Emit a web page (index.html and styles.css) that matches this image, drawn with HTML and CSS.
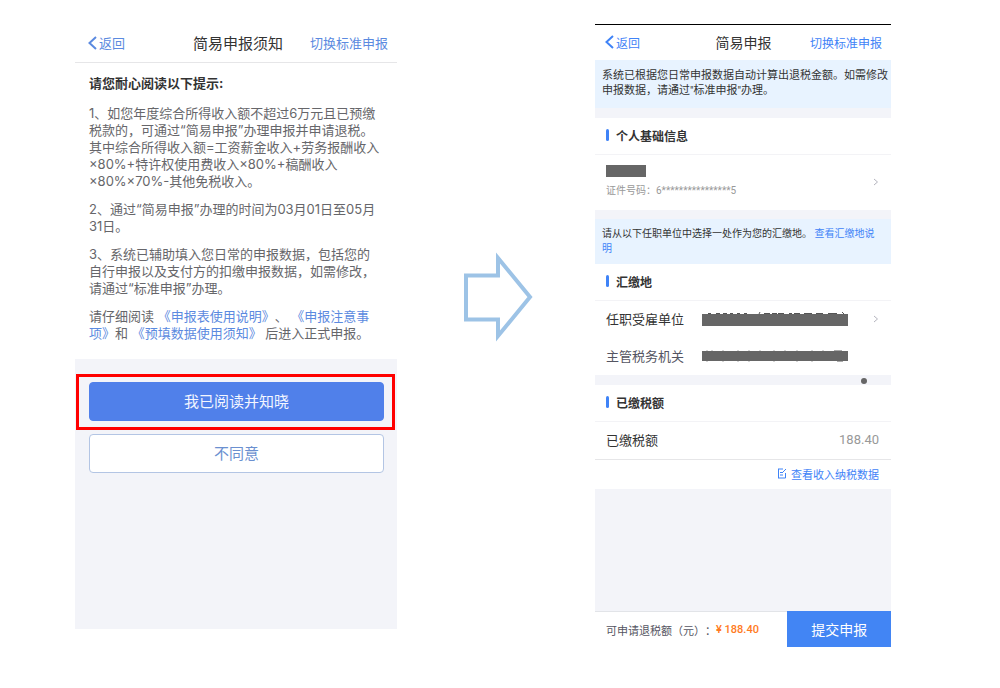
FILE: index.html
```html
<!DOCTYPE html>
<html lang="zh-CN">
<head>
  <meta charset="UTF-8">
  <meta name="viewport" content="width=device-width, initial-scale=1">
  <title>简易申报</title>
  <link rel="stylesheet" href="styles.css">
</head>
<body>

  <main class="steps">

    <!-- 申报须知 -->
    <section class="phone notice-phone">
      <header class="topbar">
        <a href="#" class="back"><svg width="9" height="14" viewBox="0 0 9 14"><path d="M8 1L1.5 7L8 13"/></svg>返回</a>
        <h1>简易申报须知</h1>
        <a href="#" class="switch">切换标准申报</a>
      </header>

      <div class="terms">
        <h2>请您耐心阅读以下提示:</h2>
        <p>1、如您年度综合所得收入额不超过6万元且已预缴<br>税款的，可通过“简易申报”办理申报并申请退税。<br>其中综合所得收入额=工资薪金收入+劳务报酬收入<br>×80%+特许权使用费收入×80%+稿酬收入<br>×80%×70%-其他免税收入。</p>
        <p>2、通过“简易申报”办理的时间为03月01日至05月<br>31日。</p>
        <p>3、系统已辅助填入您日常的申报数据，包括您的<br>自行申报以及支付方的扣缴申报数据，如需修改，<br>请通过“标准申报”办理。</p>
        <p>请仔细阅读 <a href="#">《申报表使用说明》</a>、 <a href="#">《申报注意事<br>项》</a>和 <a href="#">《预填数据使用须知》</a> 后进入正式申报。</p>
      </div>

      <div class="actions">
        <div class="highlight"><button type="button" class="btn btn-primary">我已阅读并知晓</button></div>
        <button type="button" class="btn btn-plain">不同意</button>
      </div>
    </section>

    <svg class="arrow" width="72" height="94" viewBox="0 0 72 94"><path d="M3 25.500H35V8L67 47L35 86V69.500H3Z"/></svg>

    <!-- 简易申报 -->
    <section class="phone form-phone">
      <header class="topbar">
        <a href="#" class="back"><svg width="9" height="14" viewBox="0 0 9 14"><path d="M8 1L1.500 7L8 13"/></svg>返回</a>
        <h1>简易申报</h1>
        <a href="#" class="switch">切换标准申报</a>
      </header>

      <p class="tip tip-main">系统已根据您日常申报数据自动计算出退税金额。如需修改<br>申报数据，请通过"标准申报"办理。</p>

      <div class="card">
        <h2>个人基础信息</h2>
        <div class="person">
          <div>
            <span class="mask mask-name"></span>
            <p>证件号码：6****************5</p>
          </div>
          <svg class="chevron" width="6" height="8" viewBox="0 0 6 8"><path d="M1 1L4.500 4L1 7"/></svg>
        </div>
      </div>

      <p class="tip tip-place">请从以下任职单位中选择一处作为您的汇缴地。 <a href="#">查看汇缴地说<br>明</a></p>

      <div class="card">
        <h2>汇缴地</h2>
        <div class="row">
          <span class="label">任职受雇单位</span>
          <svg class="masked" viewBox="0 0 146 14" width="146" height="14">
            <path class="scrap" d="M6 1.500h3M14 1.500h4M21 1.500h4M28 1.500h3M35 1.500h3M42 1.500h3M58 0l-1 2M62 1.500h6M70 1.500h5M76 1.500h6M87 1.500h3M92 1.500h6M102 1.500h8M114 1.500h7M126 1.500h9M140 0l2 2"/>
            <rect y="2" width="146" height="12"/>
          </svg>
          <svg class="chevron" width="6" height="8" viewBox="0 0 6 8"><path d="M1 1L4.500 4L1 7"/></svg>
        </div>
        <div class="row">
          <span class="label label-soft">主管税务机关</span>
          <svg class="masked" viewBox="0 0 146 14" width="146" height="14">
            <path class="scrap scrap-soft" d="M5 1v12M10 1v11M21 1v12M36 1v12M47 1v12M58 1v11M72 1v12M83 1v11M95 1v12M110 1v12M121 1v11M132 1.500h8M135 12.500h6"/>
            <rect y="2" width="146" height="10"/>
          </svg>
        </div>
      </div>

      <div class="divider"><i class="dot"></i></div>

      <div class="card">
        <h2>已缴税额</h2>
        <div class="row">
          <span class="label">已缴税额</span>
          <span class="amount">188.40</span>
        </div>
        <div class="more">
          <a href="#"><svg width="10" height="11" viewBox="0 0 10 11"><path d="M6 1H1M1.500 1V10M1 10H8.500V5M3 4.500H5M3 7H6M5 5L9 1"/></svg>查看收入纳税数据</a>
        </div>
      </div>

      <footer class="submit">
        <p>可申请退税额（元）：<strong>¥ 188.40</strong></p>
        <button type="button">提交申报</button>
      </footer>
    </section>

  </main>

</body>
</html>
```
FILE: styles.css
```css
* {
  box-sizing: border-box;
}

body {
  margin: 0;
  background: #fff;
  color: #333;
  text-spacing-trim: space-all;
}

h1, h2, p {
  margin: 0;
  font-weight: 400;
}

a {
  color: #3f83f7;
  text-decoration: none;
}

button {
  font-family: inherit;
  cursor: pointer;
}

svg {
  fill: none;
  flex: none;
}

.steps {
  display: grid;
  grid-template-columns: 322fr 198fr 296fr;
  align-items: start;
  padding: 24px 109px 40px 75px;
}

.phone {
  display: flex;
  flex-direction: column;
  white-space: nowrap;
  background: #f3f4f9;
}

/* 顶部导航 */
.topbar {
  display: grid;
  grid-template-columns: 1fr auto 1fr;
  align-items: center;
  padding-bottom: 1px;
  background: #fff;
}

.back {
  display: flex;
  align-items: center;
  gap: 2px;
}

.back svg {
  stroke: currentColor;
  stroke-width: 2;
}

.switch {
  text-align: right;
}

/* 左侧：须知 */
.notice-phone {
  min-height: 605px;
  font-family: Inter, "Noto Sans CJK SC", sans-serif;
  font-size: 13px;
}

.notice-phone a {
  color: #5b8ae0;
}

.notice-phone .topbar {
  height: 39px;
  padding: 0 9px 1px 13px;
  border-bottom: 1px solid #e6e6e8;
}

.notice-phone h1 {
  font-size: 15px;
}

.terms {
  padding: 12px 14px 17px;
  background: #fff;
  line-height: 17px;
  color: #66666a;
}

.terms h2 {
  margin-bottom: 13px;
  font-size: 13px;
  font-weight: 700;
  color: #333;
}

.terms p + p {
  margin-top: 11px;
}

.actions {
  padding: 15px 2px 0 1px;
}

.highlight {
  padding: 5px 8px 6px 10px;
  border: 3px solid #f00;
}

.btn {
  display: block;
  width: 100%;
  height: 39px;
  padding: 0 0 2px;
  border: 1px solid #5080ea;
  border-radius: 4px;
  font-size: 15px;
}

.btn-primary {
  background: #5080ea;
  color: #f3f6ff;
}

.btn-plain {
  width: auto;
  min-width: calc(100% - 24px);
  margin: 4px 11px 0 13px;
  border-color: #b3c5e4;
  background: #fff;
  color: #6b90d0;
}

.arrow {
  margin: 226px auto 0 66px;
  stroke: #9dc3e6;
  stroke-width: 4;
}

/* 右侧：申报表 */
.form-phone {
  min-height: 623px;
  border-top: 1px solid #000;
  font-family: Roboto, "Noto Sans CJK SC", sans-serif;
  font-size: 13px;
}

.form-phone .topbar {
  height: 35px;
  padding: 0 9px 1px 10px;
  font-size: 12px;
}

.form-phone h1 {
  font-size: 14px;
}

.tip {
  padding: 8px 0 9px 7px;
  background: #e8f3ff;
  line-height: 15px;
}

.tip-main {
  height: 48px;
  margin-bottom: 10px;
  font-size: 11px;
}

.tip-place {
  height: 45px;
  margin-top: 9px;
  padding-top: 7px;
  font-size: 10px;
}

.card {
  background: #fff;
}

.card h2 {
  display: flex;
  align-items: center;
  gap: 7px;
  height: 37px;
  padding: 0 0 2px 11px;
  border-bottom: 1px solid #f3f3f6;
  font-size: 12px;
  font-weight: 700;
}

.card h2::before {
  content: "";
  width: 3px;
  height: 12px;
  border-radius: 2px;
  background: #3f83f7;
}

.person {
  display: flex;
  align-items: center;
  justify-content: space-between;
  height: 55px;
  padding: 0 12px 2px 11px;
  font-size: 10px;
  line-height: 15px;
  color: #999;
}

.mask {
  display: block;
  background: #666;
}

.mask-name {
  width: 40px;
  height: 12px;
  margin-bottom: 6px;
}

.chevron {
  margin-left: auto;
  stroke: #b4b4be;
  stroke-width: 1;
}

.row {
  display: flex;
  align-items: center;
  height: 37px;
  padding: 0 12px 2px 11px;
}

.label {
  width: 96px;
}

.label-soft {
  color: #555562;
}

.masked rect {
  fill: #666;
}

.scrap {
  stroke: #555;
}

.scrap-soft {
  stroke: #aaa;
}

.divider {
  position: relative;
  height: 10px;
}

.dot {
  position: absolute;
  top: 3px;
  right: 24px;
  width: 6px;
  height: 6px;
  border-radius: 50%;
  background: #666;
}

.amount {
  margin-left: auto;
  color: #999;
}

.more {
  height: 30px;
  padding: 0 12px 2px 0;
  border-top: 1px solid #e6e6e8;
  font-size: 11px;
}

.more a {
  display: flex;
  align-items: center;
  justify-content: flex-end;
  gap: 4px;
  height: 100%;
}

.more svg {
  stroke: currentColor;
}

.submit {
  display: flex;
  align-items: stretch;
  height: 36px;
  margin-top: auto;
  background: #fff;
  font-size: 11px;
}

.submit p {
  flex: 1;
  display: flex;
  align-items: center;
  padding-left: 11px;
  border-top: 1px solid #e2e4e8;
  color: #555562;
}

.submit strong {
  font-weight: 500;
  color: #ff7a22;
}

.submit button {
  width: 35%;
  border: 0;
  background: #4285f4;
  color: #fff;
  font-size: 14px;
}
```
